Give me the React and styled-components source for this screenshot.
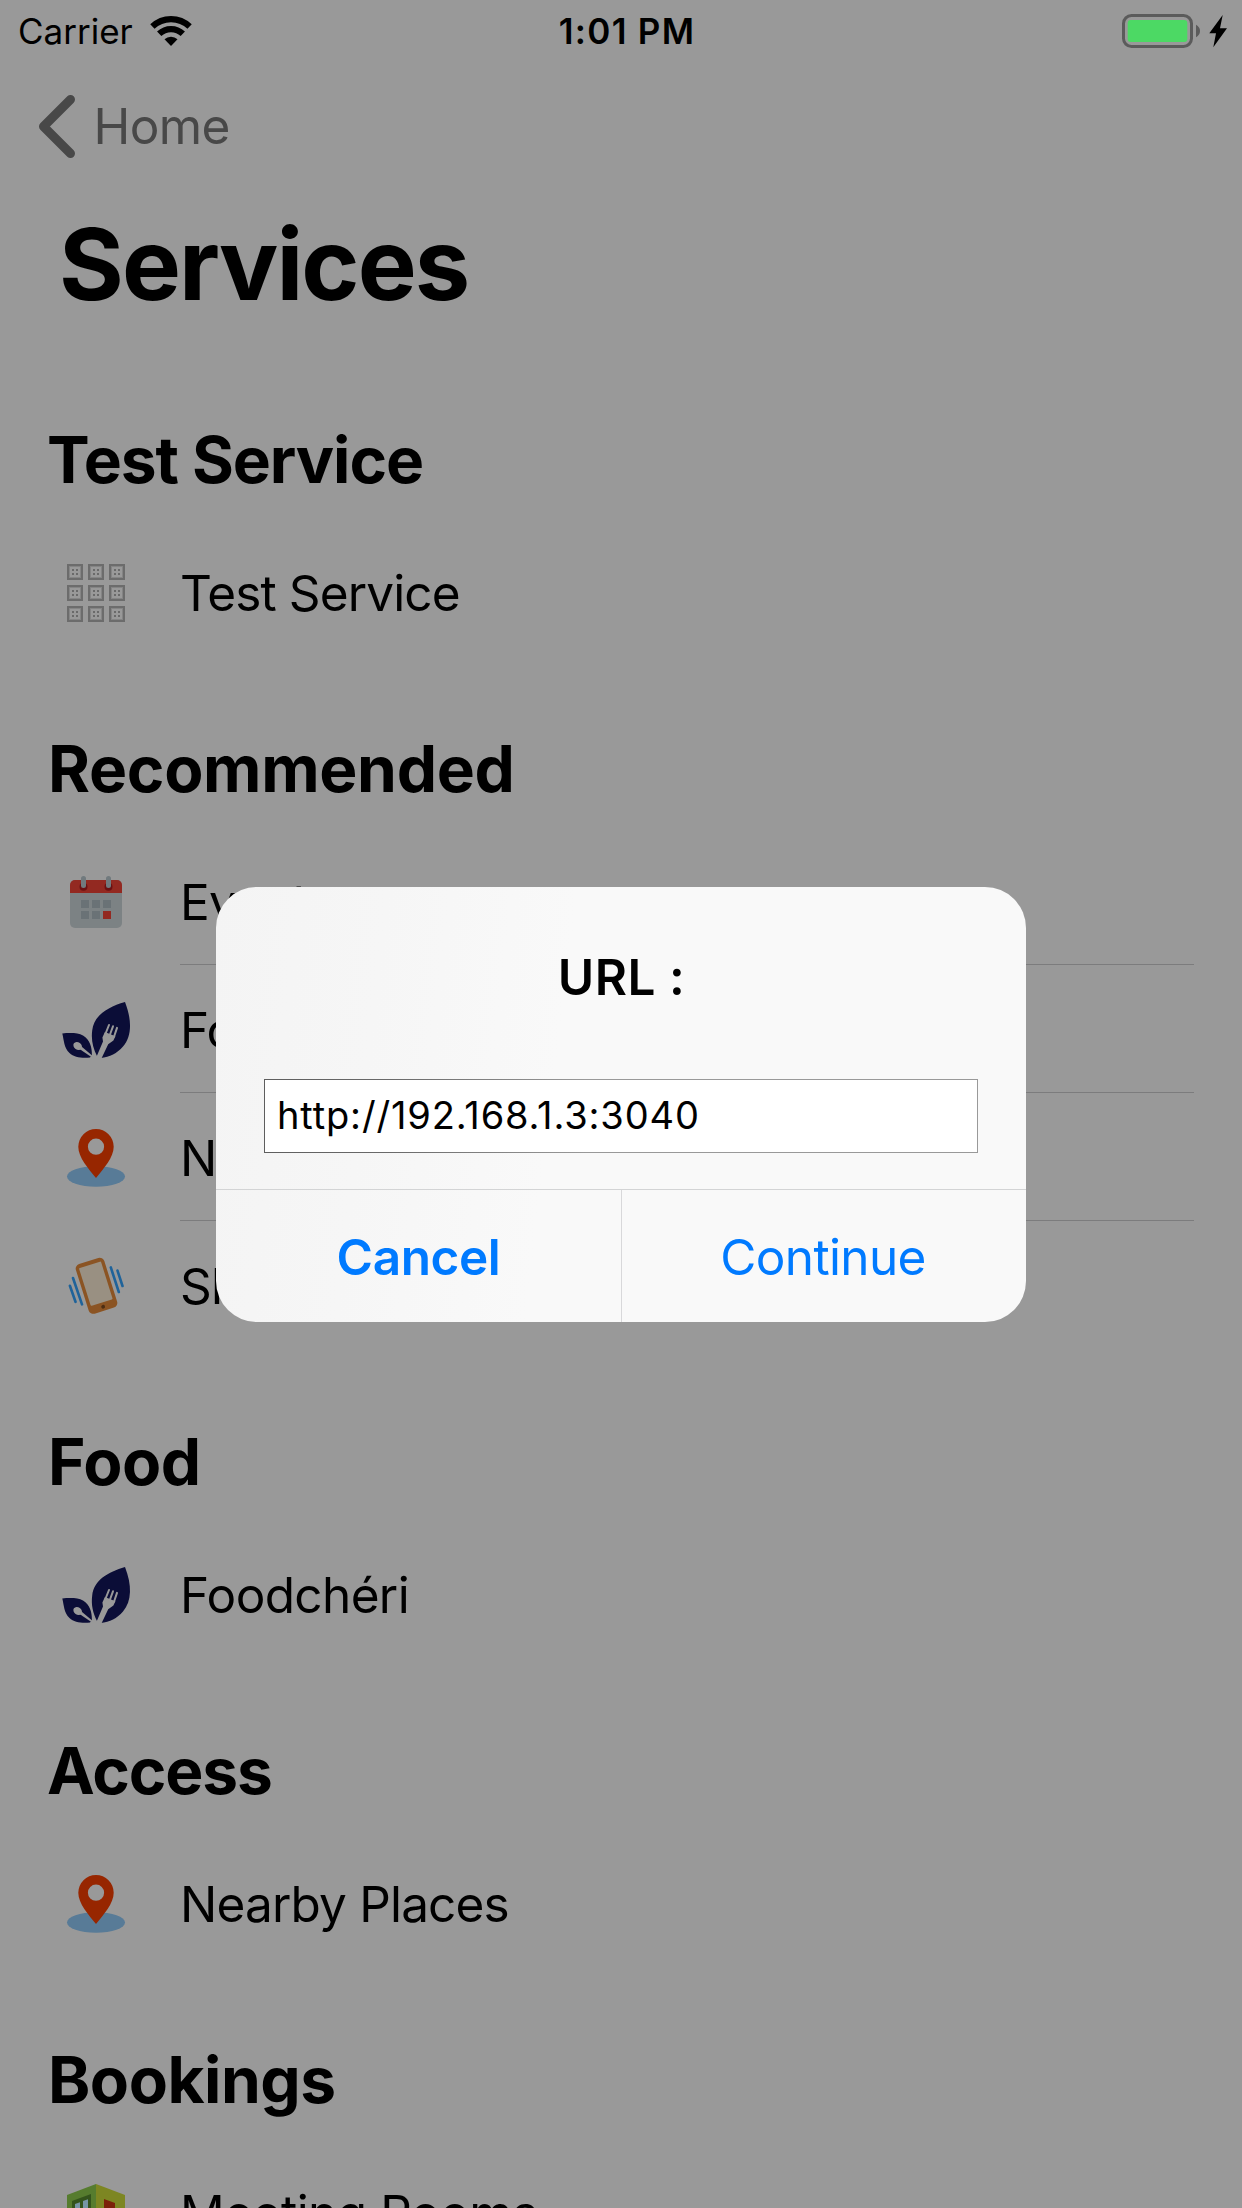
import React from "react";
import styled, { createGlobalStyle } from "styled-components";

const GlobalStyle = createGlobalStyle`
  *, *::before, *::after { box-sizing: border-box; }
  body {
    margin: 0;
    background: #999999;
    color: #000;
    font-family: Inter, "Liberation Sans", sans-serif;
  }
`;

const Screen = styled.div`
  position: relative;
  width: 1242px;
  height: 2208px;
  overflow: hidden;
  background: #999999;
`;

const StatusBar = styled.div`
  display: grid;
  grid-template-columns: 1fr auto 1fr;
  align-items: center;
  height: 60px;
  padding: 2px 14px 0 18px;
  font-size: 35px;
  line-height: 58px;
`;

const StatusLeft = styled.div`
  display: flex;
  align-items: center;
  gap: 16px;
`;

const Clock = styled.div`
  font-weight: 600;
  letter-spacing: 1.3px;
  padding-left: 8px;
`;

const StatusRight = styled.div`
  display: flex;
  align-items: center;
  justify-content: flex-end;
`;

const NavBar = styled.nav`
  display: flex;
  align-items: center;
  gap: 17.5px;
  height: 132px;
  padding-left: 38px;
  color: #484848;
  font-size: 49.5px;
  line-height: 60px;
  letter-spacing: -0.6px;
`;

const Title = styled.h1`
  margin: 0;
  height: 155px;
  padding-left: 59px;
  font-size: 99px;
  font-weight: 700;
  line-height: 144px;
  letter-spacing: -1.9px;
`;

const SectionTitle = styled.h2`
  margin: 0;
  height: 181px;
  padding: 72px 0 0 ${(p) => p.$indent ?? 48}px;
  font-size: 64px;
  font-weight: 700;
  line-height: 81px;
  letter-spacing: ${(p) => p.$tracking}px;
`;

const Row = styled.div`
  display: flex;
  height: 128px;
  padding-left: 60px;
  gap: 48px;
`;

const RowIcon = styled.div`
  display: flex;
  align-items: center;
  padding-top: 2px;
`;

const RowBody = styled.div`
  display: flex;
  align-items: center;
  flex: 1;
  margin-right: 48px;
  padding-top: 3px;
  border-bottom: 1px solid ${(p) => (p.$divided ? "#7c7c7d" : "transparent")};
  font-size: 49.5px;
  line-height: 60px;
  letter-spacing: ${(p) => p.$tracking}px;
  white-space: nowrap;
`;

const Overlay = styled.div`
  position: absolute;
  inset: 0;
  display: flex;
  align-items: center;
  justify-content: center;
  padding-top: 1px;
`;

const Dialog = styled.div`
  display: flex;
  flex-direction: column;
  width: 810px;
  height: 435px;
  border-radius: 41px;
  overflow: hidden;
  background: linear-gradient(97deg, #f4f4f4 0%, #f6f6f6 20%, #f9f9f9 42%);
`;

const DialogContent = styled.div`
  display: flex;
  flex-direction: column;
  height: 302px;
  padding: 60px 48px 0;
`;

const DialogTitle = styled.div`
  height: 132px;
  padding-left: 1px;
  font-size: 49.5px;
  font-weight: 600;
  line-height: 60px;
  letter-spacing: 0.5px;
  text-align: center;
`;

const UrlField = styled.div`
  height: 74px;
  padding-left: 12px;
  border: 1px solid;
  border-image: linear-gradient(90deg, #5e5e5e, #6a6a6a 18%, #999999 45%) 1;
  background: #fff;
  font-size: 38px;
  line-height: 70px;
  letter-spacing: 0.86px;
`;

const DialogActions = styled.div`
  display: grid;
  grid-template-columns: 406px 404px;
  height: 133px;
  border-top: 1px solid #d3d4d5;
`;

const DialogButton = styled.div`
  display: flex;
  align-items: center;
  justify-content: center;
  padding: ${(p) => (p.$primary ? "2px 0 0" : "2px 2px 0 0")};
  border-right: ${(p) => (p.$primary ? "1px solid #d8d8da" : "none")};
  color: #007aff;
  font-size: 49.5px;
  font-weight: ${(p) => (p.$primary ? 600 : 400)};
  letter-spacing: ${(p) => (p.$primary ? -0.4 : -0.64)}px;
`;

const Glyph = styled.svg`
  display: block;
  flex: none;
`;

const WifiIcon = () => (
  <Glyph width="44" height="32" viewBox="0 0 44 32">
    <g fill="none" stroke="#000" strokeWidth="6.2">
      <path d="M3.4 11.5A27 27 0 0 1 40.6 11.5" />
      <path d="M10.2 18.8A17 17 0 0 1 33.8 18.8" />
    </g>
    <path d="M22 31L15.5 24.3A9.3 9.3 0 0 1 28.5 24.3Z" />
  </Glyph>
);

const BatteryIcon = () => (
  <Glyph width="106" height="36" viewBox="0 0 106 36">
    <rect x="1.5" y="2.5" width="68" height="31" rx="8" fill="none" stroke="#5b5b5b" strokeWidth="3" />
    <rect x="5.7" y="7" width="59.6" height="22" rx="3" fill="#4cd964" />
    <path d="M74 11.8Q78 14 78 18T74 24.2Z" fill="#5b5b5b" />
    <path d="M100.7 2L98 15.3H105L91.3 34.3L94 20.3H87.3Z" />
  </Glyph>
);

const BackIcon = () => (
  <Glyph width="38" height="66" viewBox="0 0 38 66">
    <path
      d="M32.5 6.5L5.5 33.5L32.5 60.5"
      fill="none"
      stroke="#484848"
      strokeWidth="9"
      strokeLinecap="round"
      strokeLinejoin="round"
    />
  </Glyph>
);

const KeypadIcon = () => (
  <Glyph width="72" height="72" viewBox="0 0 72 72">
    {[7, 28, 49].map((y) =>
      [7, 28, 49].map((x) => (
        <g key={`${x}-${y}`} fill="none">
          <rect x={x + 1} y={y + 1} width="14" height="14" stroke="#6c6c6c" strokeWidth="2" />
          <rect x={x + 2.5} y={y + 2.5} width="11" height="11" stroke="#858585" />
          <path
            d={`M${x + 5} ${y + 6}h2m2 0h2M${x + 5} ${y + 10}h2m2 0h2`}
            stroke="#6a6a6a"
            strokeWidth="2"
          />
        </g>
      ))
    )}
  </Glyph>
);

const CalendarIcon = () => (
  <Glyph width="72" height="72" viewBox="0 0 72 72">
    <rect x="10" y="14" width="52" height="48" rx="5" fill="#7c8284" />
    <path d="M10 27V19a5 5 0 0 1 5-5H57a5 5 0 0 1 5 5V27Z" fill="#932921" />
    <circle cx="23.5" cy="20.7" r="4" fill="#6b1112" />
    <circle cx="48.5" cy="20.7" r="4" fill="#6b1112" />
    <rect x="21" y="10" width="5" height="12" rx="2.5" fill="#717a7e" />
    <rect x="46" y="10" width="5" height="12" rx="2.5" fill="#717a7e" />
    <path d="M21 34h8v8h-8zM32 34h8v8h-8zM43 34h8v8h-8zM21 45h8v8h-8zM32 45h8v8h-8z" fill="#6a7276" />
    <path d="M43 45h8v8h-8z" fill="#932921" />
  </Glyph>
);

const LeafIcon = () => (
  <Glyph width="72" height="72" viewBox="0 0 72 72">
    <g fill="#0b0d37">
      <path d="M65 8C72 26 72 42 63 52.5C57 59.5 50 63 40.5 64L37 62C33 54 31 46 32.2 36.5C34 21 48 13 65 8Z" />
      <path d="M2.3 39.4C10 38.7 18 38.6 23 41.5C30 46 32 53 31.9 61L30 63.6C22 64.4 14 63.5 9.5 59C4 54 4 46 2.3 39.4Z" />
    </g>
    <g fill="#999999">
      <path d="M44.9 38L55.4 42.2L53.4 46.4L48.2 50.2L41.2 65L36.4 63L43 47.6L42.4 43.4Z" />
      <ellipse cx="17.7" cy="52" rx="4.6" ry="3.7" transform="rotate(35 17.7 52)" />
      <path d="M21.5 52.5L32.2 61.4L31 62.8L19.5 55Z" />
    </g>
    <path
      d="M45.6 39.5L49 31M49.8 41L53 32.3M54 42.8L57 33.9"
      fill="none"
      stroke="#999999"
      strokeWidth="2"
      strokeLinecap="round"
    />
  </Glyph>
);

const PinIcon = () => (
  <Glyph width="72" height="72" viewBox="0 0 72 72">
    <ellipse cx="36" cy="54.5" rx="29" ry="10.2" fill="#587b97" />
    <path
      fill="#972600"
      fillRule="evenodd"
      d="M36 7A17.7 17.7 0 0 0 18.3 24.7C18.3 35.5 28.5 46.5 36 56C43.5 46.5 53.7 35.5 53.7 24.7A17.7 17.7 0 0 0 36 7ZM36 16.6a8.1 8.1 0 1 1 0 16.2a8.1 8.1 0 0 1 0-16.2Z"
    />
  </Glyph>
);

const ShakeIcon = () => (
  <Glyph width="72" height="72" viewBox="0 0 72 72">
    <g transform="rotate(-17.5 36.5 35.8)">
      <rect x="21.6" y="9.8" width="29.8" height="52" rx="4.8" fill="#8b5423" />
      <rect x="25" y="13.8" width="23" height="39.6" rx="1" fill="#999082" />
      <circle cx="36.5" cy="57.8" r="1.9" fill="#4c2e14" />
    </g>
    <path
      d="M13 28L22 54.3M9.9 35.8L15.5 51.8M50.8 17.4L58.8 42M57.5 20.6L62.5 36"
      fill="none"
      stroke="#1f639a"
      strokeWidth="2.6"
      strokeLinecap="round"
    />
  </Glyph>
);

const BuildingIcon = () => (
  <Glyph width="72" height="72" viewBox="0 0 72 72">
    <path d="M7 18L36 7V65L7 56Z" fill="#567c2e" />
    <path d="M65 18L36 7V65L65 56Z" fill="#7d8622" />
    <path d="M12 24L31 17V52L12 50Z" fill="#34541c" />
    <path d="M15 27L20 25.2V46H15ZM23 24L28 22.2V46H23Z" fill="#7696a5" />
    <path d="M44 22L55 26V52L44 54Z" fill="#7b2108" />
  </Glyph>
);

const sections = [
  {
    title: "Test Service",
    tracking: -1.07,
    indent: 47,
    rows: [{ label: "Test Service", icon: KeypadIcon, tracking: -0.87 }],
  },
  {
    title: "Recommended",
    tracking: -0.3,
    rows: [
      { label: "Events", icon: CalendarIcon, tracking: -0.7 },
      { label: "Foodchéri", icon: LeafIcon, tracking: -0.64 },
      { label: "Nearby Places", icon: PinIcon, tracking: -0.82 },
      { label: "Shake", icon: ShakeIcon, tracking: -0.8 },
    ],
  },
  {
    title: "Food",
    tracking: -0.5,
    rows: [{ label: "Foodchéri", icon: LeafIcon, tracking: -0.64 }],
  },
  {
    title: "Access",
    tracking: -1.1,
    indent: 47,
    rows: [{ label: "Nearby Places", icon: PinIcon, tracking: -0.82 }],
  },
  {
    title: "Bookings",
    tracking: -0.47,
    rows: [{ label: "Meeting Rooms", icon: BuildingIcon, tracking: -0.5 }],
  },
];

export default function App() {
  return (
    <Screen>
      <GlobalStyle />
      <StatusBar>
        <StatusLeft>
          <span>Carrier</span>
          <WifiIcon />
        </StatusLeft>
        <Clock>1:01 PM</Clock>
        <StatusRight>
          <BatteryIcon />
        </StatusRight>
      </StatusBar>
      <NavBar>
        <BackIcon />
        <span>Home</span>
      </NavBar>
      <Title>Services</Title>
      {sections.map((section) => (
        <section key={section.title}>
          <SectionTitle $tracking={section.tracking} $indent={section.indent}>
            {section.title}
          </SectionTitle>
          {section.rows.map(({ label, icon: Icon, tracking }, i) => (
            <Row key={label}>
              <RowIcon>
                <Icon />
              </RowIcon>
              <RowBody $tracking={tracking} $divided={i < section.rows.length - 1}>
                {label}
              </RowBody>
            </Row>
          ))}
        </section>
      ))}
      <Overlay>
        <Dialog role="dialog">
          <DialogContent>
            <DialogTitle>URL :</DialogTitle>
            <UrlField>http://192.168.1.3:3040</UrlField>
          </DialogContent>
          <DialogActions>
            <DialogButton $primary>Cancel</DialogButton>
            <DialogButton>Continue</DialogButton>
          </DialogActions>
        </Dialog>
      </Overlay>
    </Screen>
  );
}
